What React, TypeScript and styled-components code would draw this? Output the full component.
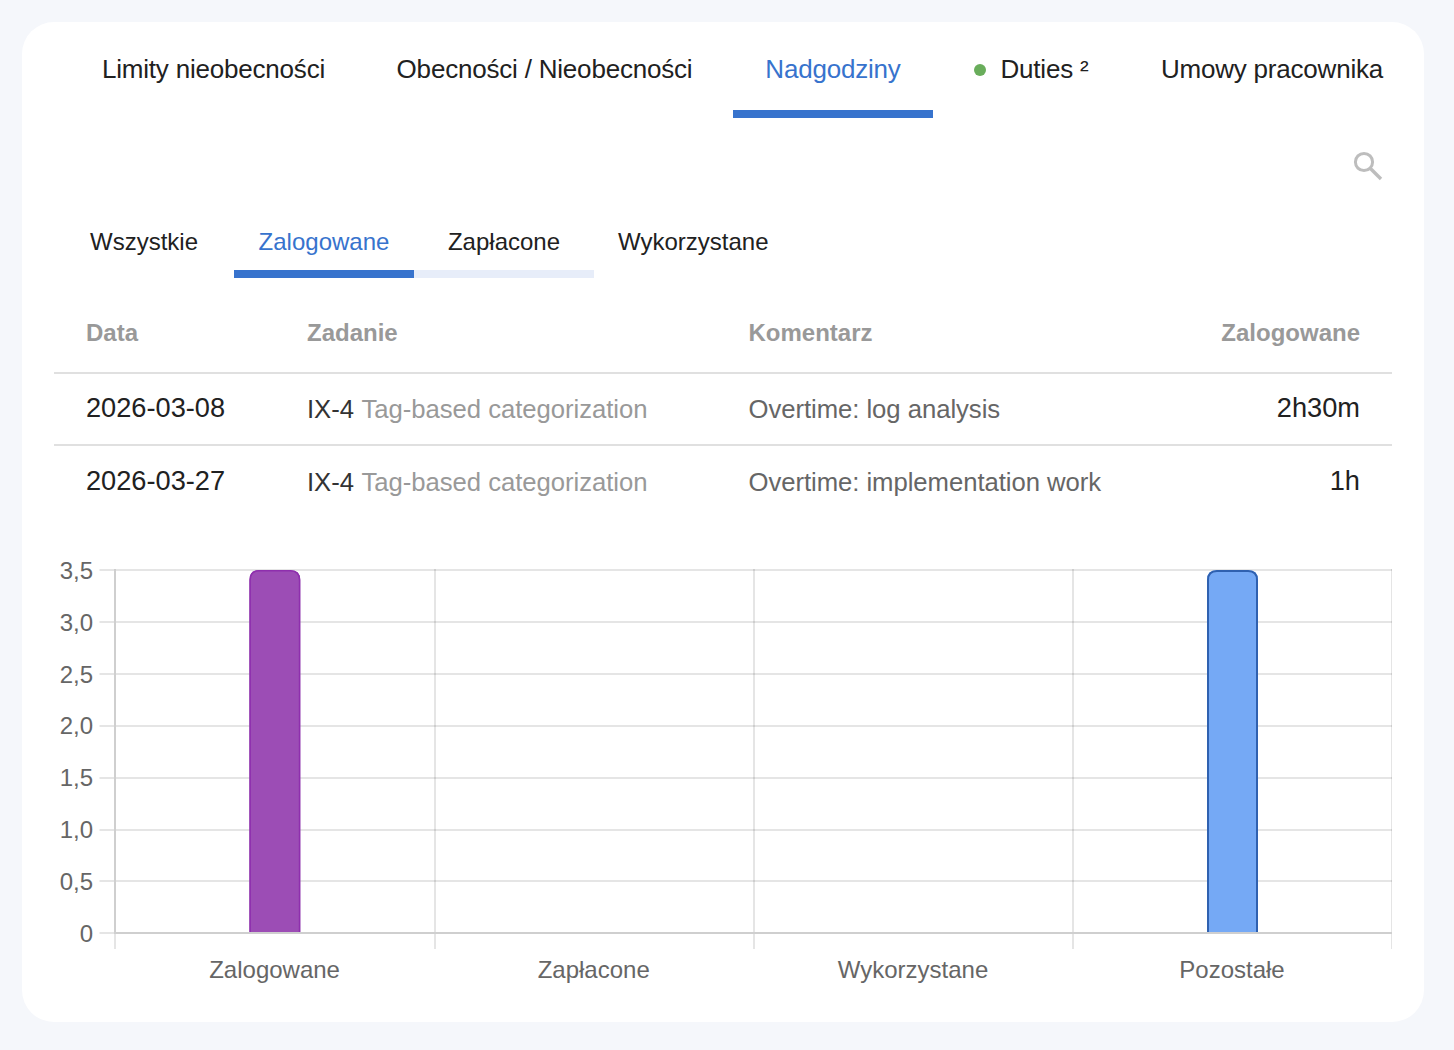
import React from "react";
import styled, { createGlobalStyle } from "styled-components";

const GlobalStyle = createGlobalStyle`
  * { box-sizing: border-box; }
  body {
    margin: 0;
    background: #f5f7fb;
    font-family: "Liberation Sans", Helvetica, Arial, sans-serif;
    color: #212121;
  }
`;

const Page = styled.div`
  height: 1050px;
  padding: 22px 30px 28px 22px;
  overflow: hidden;
`;

const Card = styled.main`
  height: 1000px;
  padding: 0 32px;
  border-radius: 32px;
  background: #fff;
`;

const MainTabs = styled.nav`
  display: flex;
  gap: 8px;
  height: 96px;
  padding-left: 17px;
`;

const MainTab = styled.button<{ $active?: boolean; $width: number }>`
  display: flex;
  align-items: center;
  justify-content: center;
  flex: 0 0 ${(p) => p.$width}px;
  padding: 5px 0 0;
  border: 0;
  border-bottom: 8px solid ${(p) => (p.$active ? "#3773cd" : "transparent")};
  background: none;
  color: ${(p) => (p.$active ? "#3773cd" : "#212121")};
  font: 26px/30px "Liberation Sans", Helvetica, Arial, sans-serif;
  letter-spacing: -0.2px;
  white-space: nowrap;
`;

const StatusDot = styled.span`
  width: 12px;
  height: 12px;
  margin: 2px 15px 0 0;
  border-radius: 50%;
  background: #69ad5b;
`;

const Toolbar = styled.div`
  display: flex;
  justify-content: flex-end;
  align-items: center;
  height: 96px;
  padding-right: 4px;
`;

const SubTabs = styled.nav`
  display: flex;
  height: 64px;
`;

const SubTab = styled.button<{ $line?: string; $active?: boolean }>`
  min-width: 180px;
  height: 64px;
  padding: 0 24px;
  border: 0;
  border-bottom: 8px solid ${(p) => p.$line ?? "transparent"};
  background: none;
  color: ${(p) => (p.$active ? "#3773cd" : "#212121")};
  font: 24px/56px "Liberation Sans", Helvetica, Arial, sans-serif;
`;

const Table = styled.div`
  margin-top: 22px;
`;

const TableRow = styled.div<{ $height: number; $line?: boolean }>`
  display: grid;
  grid-template-columns: 221px 441.5px 1fr 200px;
  align-items: center;
  height: ${(p) => p.$height}px;
  padding: 0 32px;
  border-bottom: ${(p) => (p.$line ? "2px solid #e0e0e0" : "0")};
`;

const HeadCell = styled.div<{ $right?: boolean }>`
  color: #999;
  font-size: 24px;
  font-weight: 700;
  line-height: 30px;
  text-align: ${(p) => (p.$right ? "right" : "left")};
  padding-bottom: 6px;
`;

const ValueCell = styled.div<{ $right?: boolean }>`
  padding-bottom: 2px;
  font-size: 27.2px;
  line-height: 30px;
  text-align: ${(p) => (p.$right ? "right" : "left")};
`;

const TextCell = styled.div`
  color: #666;
  font-size: 25.7px;
  line-height: 30px;
  letter-spacing: -0.05px;
  white-space: nowrap;
`;

const TaskKey = styled.span`
  margin-right: 1px;
  color: #333;
`;

const TaskName = styled.span`
  color: #999;
`;

const ChartSvg = styled.svg`
  display: block;
  margin-top: 33px;
`;

const ChartText = styled.text`
  fill: #666;
  font: 24px "Liberation Sans", Helvetica, Arial, sans-serif;
`;

const rows = [
  { date: "2026-03-08", key: "IX-4", task: "Tag-based categorization", comment: "Overtime: log analysis", time: "2h30m" },
  { date: "2026-03-27", key: "IX-4", task: "Tag-based categorization", comment: "Overtime: implementation work", time: "1h" },
];

const ticks = [
  { label: "3,5", y: 20, baseline: 29 },
  { label: "3,0", y: 72, baseline: 81 },
  { label: "2,5", y: 124, baseline: 133 },
  { label: "2,0", y: 176, baseline: 184 },
  { label: "1,5", y: 228, baseline: 236 },
  { label: "1,0", y: 280, baseline: 288 },
  { label: "0,5", y: 331, baseline: 340 },
  { label: "0", y: 383, baseline: 392 },
];

const categories = [
  { label: "Zalogowane", x: 220.6 },
  { label: "Zapłacone", x: 539.7 },
  { label: "Wykorzystane", x: 859 },
  { label: "Pozostałe", x: 1178 },
];

type BarProps = { x: number; width: number; fill: string; stroke: string; line: number };

const Bar = ({ x, width, fill, stroke, line }: BarProps) => {
  const h = line / 2;
  const r = x + width;
  return (
    <>
      <path d={`M${x} 382V30Q${x} 20 ${x + 10} 20H${r - 10}Q${r} 20 ${r} 30V382Z`} fill={fill} />
      <path
        d={`M${x + h} 382V30Q${x + h} ${20 + h} ${x + 10} ${20 + h}H${r - 10}Q${r - h} ${20 + h} ${r - h} 30V382`}
        fill="none"
        stroke={stroke}
        strokeWidth={line}
      />
    </>
  );
};

const OvertimeChart = () => (
  <ChartSvg width="1338" height="450" viewBox="0 0 1338 450">
    <g stroke="#000" strokeOpacity="0.1" strokeWidth="2">
      {ticks.map((t) => (
        <line key={t.label} x1="45.5" x2="1338" y1={t.y} y2={t.y} />
      ))}
      {[61, 381, 700, 1019, 1338].map((x) => (
        <line key={x} x1={x} x2={x} y1="19" y2="399" />
      ))}
    </g>
    <path d="M61 20V384M60 383H1338" stroke="#cfcfcf" strokeWidth="2" />
    <Bar x={195.4} width={50.9} fill="#9c4db5" stroke="#8e2fad" line={1.5} />
    <Bar x={1153} width={51} fill="#75a9f5" stroke="#2f61b0" line={2} />
    {ticks.map((t) => (
      <ChartText key={t.label} x="39" y={t.baseline} textAnchor="end">
        {t.label}
      </ChartText>
    ))}
    {categories.map((c) => (
      <ChartText key={c.label} x={c.x} y="428" textAnchor="middle">
        {c.label}
      </ChartText>
    ))}
  </ChartSvg>
);

const SearchIcon = () => (
  <svg width="36" height="36" viewBox="0 0 36 36" fill="none" stroke="#bdbdbd" strokeWidth="3">
    <circle cx="12" cy="14" r="8.6" />
    <path d="M18.2 20.2L29 31" strokeWidth="3.4" />
  </svg>
);

export default function App() {
  return (
    <>
      <GlobalStyle />
      <Page>
        <Card>
          <MainTabs>
            <MainTab $width={285}>Limity nieobecności</MainTab>
            <MainTab $width={361}>Obecności / Nieobecności</MainTab>
            <MainTab $width={200} $active>Nadgodziny</MainTab>
            <MainTab $width={180}>
              <StatusDot />
              Duties ²
            </MainTab>
            <MainTab $width={286}>Umowy pracownika</MainTab>
          </MainTabs>
          <Toolbar>
            <SearchIcon />
          </Toolbar>
          <SubTabs>
            <SubTab>Wszystkie</SubTab>
            <SubTab $active $line="#3773cd">Zalogowane</SubTab>
            <SubTab $line="#e7edf9">Zapłacone</SubTab>
            <SubTab>Wykorzystane</SubTab>
          </SubTabs>
          <Table>
            <TableRow $height={74} $line>
              <HeadCell>Data</HeadCell>
              <HeadCell>Zadanie</HeadCell>
              <HeadCell>Komentarz</HeadCell>
              <HeadCell $right>Zalogowane</HeadCell>
            </TableRow>
            {rows.map((r, i) => (
              <TableRow key={r.date} $height={i === 0 ? 72 : 71} $line={i === 0}>
                <ValueCell>{r.date}</ValueCell>
                <TextCell>
                  <TaskKey>{r.key}</TaskKey> <TaskName>{r.task}</TaskName>
                </TextCell>
                <TextCell>{r.comment}</TextCell>
                <ValueCell $right>{r.time}</ValueCell>
              </TableRow>
            ))}
          </Table>
          <OvertimeChart />
        </Card>
      </Page>
    </>
  );
}
